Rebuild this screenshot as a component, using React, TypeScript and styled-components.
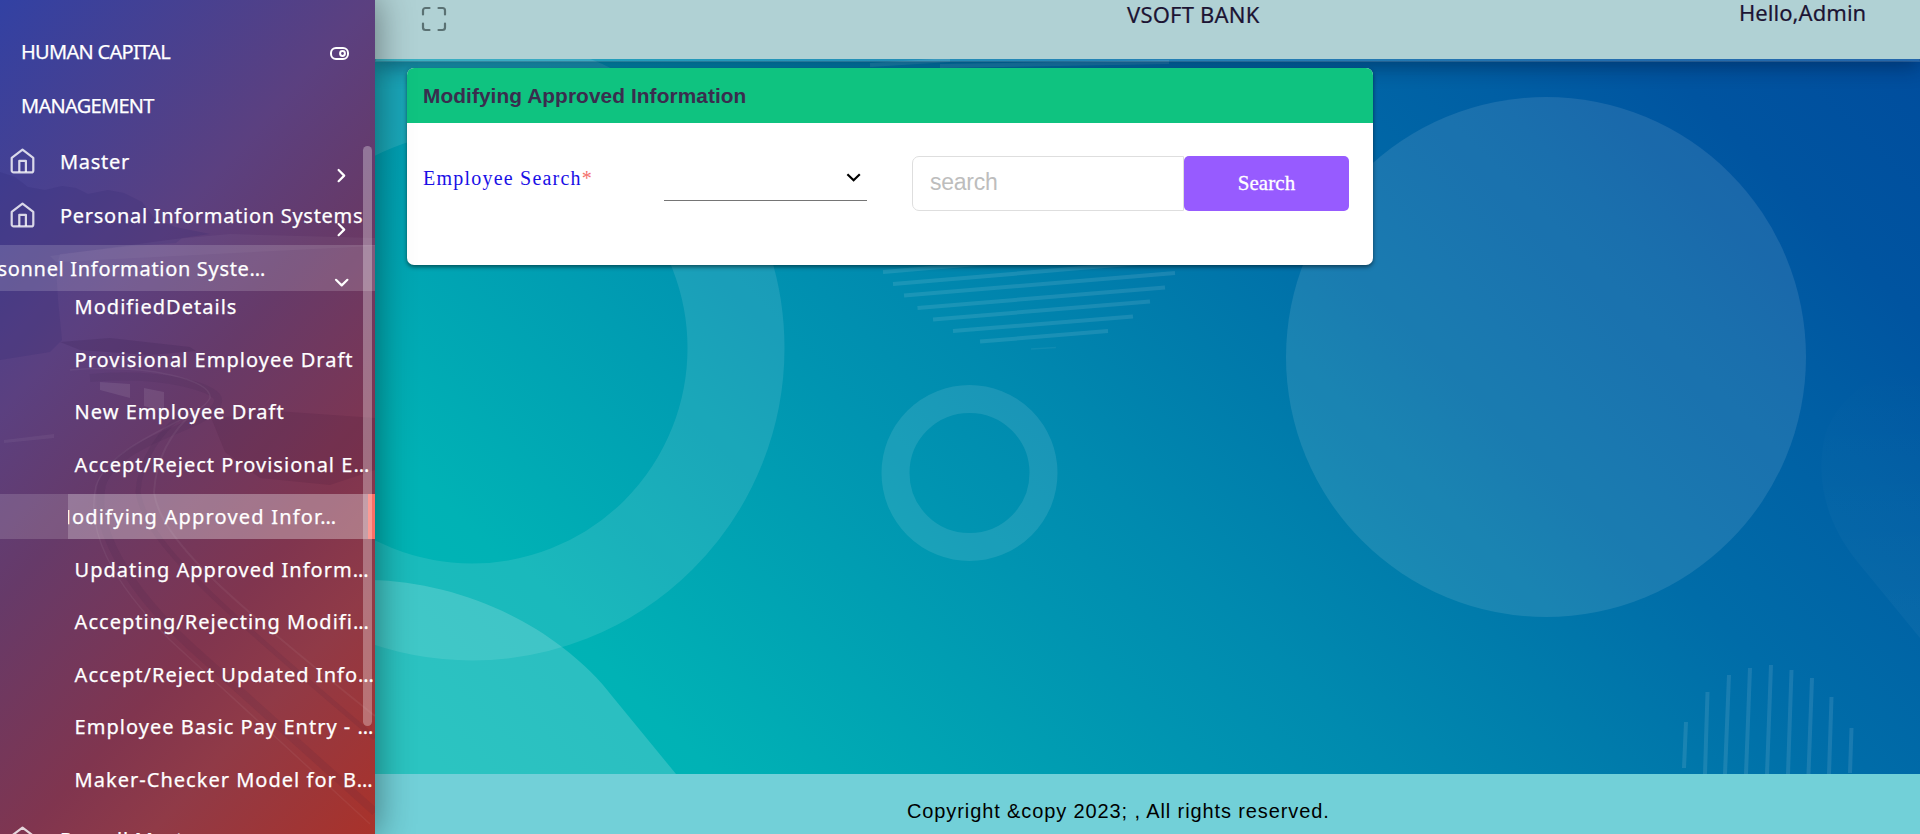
import React from "react";
import styled, { createGlobalStyle, css } from "styled-components";

const GlobalStyle = createGlobalStyle`
  * { box-sizing: border-box; }
  html, body { margin: 0; padding: 0; overflow: hidden; }
  body { font-family: "Noto Sans", "Open Sans", sans-serif; }
`;

const Page = styled.div`
  position: relative;
  display: flex;
  width: 100%;
  height: 834px;
  overflow: hidden;
`;

const Backdrop = styled.svg`
  position: absolute;
  inset: 0;
  width: 1920px;
  height: 834px;
`;

/* ---------- sidebar ---------- */

const Sidebar = styled.aside`
  position: relative;
  z-index: 2;
  flex: 0 0 375px;
  width: 375px;
  min-width: 0;
  height: 834px;
  padding-top: 25px;
  color: #fff;
  font-size: 20px;
  -webkit-text-stroke: 0.25px #fff;
  background: linear-gradient(
    132deg,
    #3241a3 0%,
    #5b4080 33%,
    #663a69 48%,
    #80354f 69%,
    #903a47 80%,
    #a9322a 100%
  );
  box-shadow: 0 0 34px 2px rgba(0, 0, 0, 0.42);
`;

const SidebarArt = styled.svg`
  position: absolute;
  inset: 0;
  width: 375px;
  height: 834px;
`;

const Brand = styled.div`
  position: relative;
  display: flex;
  justify-content: space-between;
  height: 109px;
  padding: 0 26px 0 21px;
`;

const BrandName = styled.div`
  width: 200px;
  line-height: 54px;
  letter-spacing: -0.7px;
`;

const ToggleIcon = styled.svg`
  width: 19px;
  height: 13px;
  margin-top: 22px;
`;

const Nav = styled.nav`
  position: relative;
  height: 700px;
  overflow: hidden;
`;

const NavRow = styled.div`
  position: relative;
  display: flex;
  align-items: center;
  height: 54px;
  padding-left: 10px;
  white-space: nowrap;
  letter-spacing: 0.72px;
`;

const RowLabel = styled.span`
  margin-left: 25px;
`;

const OpenRow = styled(NavRow)`
  justify-content: flex-end;
  height: 46px;
  margin-top: 3px;
  padding: 0 109px 0 0;
  letter-spacing: 0.68px;
  background: rgba(255, 255, 255, 0.16);
`;

const RowChevron = styled.svg<{ $top: number }>`
  position: absolute;
  right: 25px;
  top: ${(p) => p.$top}px;
  width: 17px;
  height: 17px;
`;

const SubList = styled.div`
  margin-top: -7px;
  padding-bottom: 3px;
`;

const SubItem = styled.div<{ $active?: boolean }>`
  height: 45px;
  margin-bottom: 7.5px;
  padding-left: ${(p) => (p.$active ? 68 : 74.6)}px;
  line-height: 46px;
  letter-spacing: 1.02px;
  white-space: nowrap;
  overflow: hidden;
  ${(p) =>
    p.$active &&
    css`
      background: rgba(255, 255, 255, 0.15);
      letter-spacing: 1.2px;
    `}
`;

const ActiveFill = styled.div`
  height: 45px;
  overflow: hidden;
  text-indent: -15.3px;
  background: rgba(255, 255, 255, 0.2);
  border-right: 7px solid #fa6f66;
`;

const ScrollThumb = styled.div`
  position: absolute;
  left: 363px;
  top: 146px;
  width: 9px;
  height: 580px;
  border-radius: 5px;
  background: rgba(255, 255, 255, 0.3);
`;

/* ---------- main area ---------- */

const Main = styled.main`
  position: relative;
  flex: 1;
  min-width: 0;
  display: flex;
  flex-direction: column;
  height: 834px;
`;

const TopBar = styled.header`
  display: grid;
  grid-template-columns: 47px 1fr 180px;
  height: 62px;
  color: #1c1433;
  font-size: 22px;
  -webkit-text-stroke: 0.2px #1c1433;
  background: #b0d1d4;
  background-clip: padding-box;
  border-bottom: 3px solid rgba(255, 255, 255, 0.14);
  box-shadow: 0 5px 20px rgba(0, 20, 50, 0.42);
`;

const FullscreenIcon = styled.svg`
  width: 26px;
  height: 26px;
  margin: 6px 0 0 46px;
`;

const BankName = styled.div`
  padding-left: 705px;
  line-height: 29px;
  letter-spacing: 0.2px;
`;

const Greeting = styled.div`
  line-height: 25px;
  letter-spacing: 0.05px;
  margin-left: -1px;
`;

const Content = styled.section`
  flex: 1;
  padding: 6px 0 0 32px;
`;

const Card = styled.div`
  width: 966px;
  height: 197px;
  border-radius: 7px;
  overflow: hidden;
  background: #fff;
  box-shadow: 0 2px 4px rgba(0, 0, 0, 0.5);
`;

const CardTitle = styled.h2`
  height: 55px;
  margin: 0;
  padding-left: 16px;
  background: #0fc380;
  color: #3a2d4e;
  font: bold 20.8px/55px "Liberation Sans", Arial, sans-serif;
  letter-spacing: 0.1px;
`;

const FormRow = styled.div`
  display: flex;
  align-items: flex-start;
  padding: 33px 24px 0 16px;
`;

const FieldLabel = styled.label`
  width: 241px;
  color: #1a10e6;
  font: 20px/44px "Liberation Serif", "Times New Roman", serif;
  letter-spacing: 1.22px;
`;

const Required = styled.span`
  color: #f4716b;
`;

const Select = styled.div`
  display: flex;
  justify-content: flex-end;
  width: 203px;
  height: 45px;
  padding: 13px 5px 0 0;
  border-bottom: 1px solid #757575;
`;

const SearchGroup = styled.div`
  display: flex;
  height: 55px;
  margin-left: 45px;
`;

const SearchInput = styled.input`
  width: 272px;
  height: 55px;
  padding: 0 0 3px 17px;
  border: 1px solid #dedede;
  border-radius: 7px 0 0 7px;
  outline: none;
  background: #fff;
  font: 23px "Liberation Sans", Arial, sans-serif;
  letter-spacing: -0.25px;
  &::placeholder {
    color: #bdbdbd;
    opacity: 1;
  }
`;

const SearchButton = styled.button`
  width: 165px;
  height: 55px;
  padding: 0;
  border: 0;
  border-radius: 5px;
  background: #975bff;
  color: #fff;
  font: 21px "Liberation Serif", "Times New Roman", serif;
  letter-spacing: 0.1px;
  -webkit-text-stroke: 0.3px #fff;
`;

const Footer = styled.footer`
  height: 60px;
  padding: 13px 0 0 532px;
  background: #72d0d8;
  color: #000;
  font: 20px/48px "Liberation Sans", Arial, sans-serif;
  letter-spacing: 0.89px;
`;

const HomeIcon = () => (
  <svg width="25" height="26" viewBox="0 0 25 26" fill="none" stroke="#fff" strokeOpacity="0.8" strokeWidth="2.2" strokeLinejoin="round">
    <path d="M1.7 9.8 12.5 1.6 23.3 9.8V22.4a2 2 0 0 1-2 2H3.7a2 2 0 0 1-2-2Z" />
    <path d="M9.3 24V12.8h6.6V24" />
  </svg>
);

const RightChevron = () => (
  <RowChevron $top={33} viewBox="0 0 17 17" fill="none" stroke="#fff" strokeWidth="2.2" strokeLinecap="round" strokeLinejoin="round">
    <path d="M5.6 3 11.2 8.6 5.6 14.2" />
  </RowChevron>
);

const subItemsBefore = [
  "ModifiedDetails",
  "Provisional Employee Draft",
  "New Employee Draft",
  "Accept/Reject Provisional E…",
];

const subItemsAfter = [
  "Updating Approved Inform…",
  "Accepting/Rejecting Modifi…",
  "Accept/Reject Updated Info…",
  "Employee Basic Pay Entry - …",
  "Maker-Checker Model for B…",
];

const slantedLines = [
  [883, 272, 1186, 246],
  [893, 284, 1182, 259.5],
  [904, 295.5, 1175, 273],
  [917.5, 308, 1165, 287.5],
  [933, 319.5, 1150, 301.5],
  [953, 331, 1133, 316.5],
  [980, 341.5, 1108, 331],
  [870, 65, 950, 60],
  [940, 66, 1169, 62],
];

const uprightLines = [
  [1686, 722, 1684, 768],
  [1707.5, 692, 1705, 774],
  [1729, 675, 1725, 774],
  [1750, 668, 1746, 774],
  [1771, 665, 1767, 774],
  [1791.5, 670, 1788, 774],
  [1812, 678, 1808.5, 774],
  [1831.5, 697, 1829, 774],
  [1851.5, 728, 1850, 773],
];

const PageBackdrop = () => (
  <Backdrop viewBox="0 0 1920 834">
    <defs>
      <linearGradient id="sea" gradientUnits="userSpaceOnUse" x1="375" y1="834" x2="1564.5" y2="-355.5">
        <stop offset="0" stopColor="#00bbb5" />
        <stop offset=".168" stopColor="#00b2b5" />
        <stop offset=".315" stopColor="#009db2" />
        <stop offset=".378" stopColor="#0094b1" />
        <stop offset=".454" stopColor="#008aaf" />
        <stop offset=".554" stopColor="#007bab" />
        <stop offset=".655" stopColor="#006ca8" />
        <stop offset=".78" stopColor="#005fa4" />
        <stop offset=".865" stopColor="#0054a0" />
        <stop offset="1" stopColor="#004c9d" />
      </linearGradient>
      <linearGradient id="haze" x1="0" y1="0" x2="0" y2="1">
        <stop offset="0" stopColor="#fff" stopOpacity="0" />
        <stop offset="1" stopColor="#fff" stopOpacity=".035" />
      </linearGradient>
    </defs>
    <rect width="1920" height="834" fill="url(#sea)" />
    <circle cx="472" cy="348" r="264" fill="none" stroke="#fff" strokeOpacity=".1" strokeWidth="97" />
    <path d="M370 580C440 581 512 608 562 647C584 664 599 679 612 696L676 774H370Z" fill="#fff" fillOpacity=".17" />
    <circle cx="969.5" cy="473" r="74" fill="none" stroke="#fff" strokeOpacity=".1" strokeWidth="28" />
    <circle cx="1546" cy="357" r="260" fill="#fff" fillOpacity=".1" />
    <path d="M1920 638L1856 560C1826 522 1816 480 1824 440C1832 404 1868 372 1920 362Z" fill="url(#haze)" />
    <g stroke="#fff" strokeOpacity=".1" strokeWidth="4">
      {slantedLines.map(([a, b, c, d]) => (
        <line key={`${a}-${b}`} x1={a} y1={b} x2={c} y2={d} />
      ))}
      {uprightLines.map(([a, b, c, d]) => (
        <line key={`${a}-${b}`} x1={a} y1={b} x2={c} y2={d} />
      ))}
    </g>
    <line x1="1031" y1="349" x2="1056" y2="347.5" stroke="#fff" strokeOpacity=".06" strokeWidth="1.5" />
  </Backdrop>
);

const CoastArt = () => (
  <SidebarArt viewBox="0 0 375 834" fill="none">
    <path
      d="M0 172L15 177L28 187L45 190L62 186L76 188L88 194L108 190L124 193L142 202L154 218L175 227L210 234L182 238L176 243L130 246L60 254L56 268L58 300L62 340L50 352L0 360Z"
      fill="#241f68"
      fillOpacity=".14"
    />
    <path d="M175 239L230 234L375 238V246L56 262L50 256Z" fill="#fff" fillOpacity=".04" />
    <path d="M60 342L110 338L190 347L196 351L150 355L80 350Z" fill="#2a1440" fillOpacity=".15" />
    <path d="M212 420L262 410L375 418V470L330 485L260 478L225 452Z" fill="#3b0f30" fillOpacity=".12" />
    <path d="M90 378C165 372 222 388 218 402C212 428 120 436 102 484C92 530 130 590 190 646L375 812" stroke="#2a1440" strokeOpacity=".08" strokeWidth="8" />
    <path d="M70 370C150 364 212 380 210 398C200 420 112 440 96 486C86 530 110 580 170 640L370 824" stroke="#fff" strokeOpacity=".05" strokeWidth="1.5" />
    <path d="M196 410C170 432 156 460 154 492C160 540 230 600 375 716" stroke="#fff" strokeOpacity=".05" strokeWidth="2" />
    <path d="M186 412C160 430 140 460 138 492C146 540 200 590 375 738" stroke="#2a1440" strokeOpacity=".08" strokeWidth="5" />
    <path d="M100 382L130 384V398L100 390ZM144 388L164 392V412L144 406Z" fill="#fff" fillOpacity=".09" />
    <path d="M4 440L54 434V438L4 443Z" fill="#fff" fillOpacity=".05" />
  </SidebarArt>
);

export default function App() {
  return (
    <Page>
      <GlobalStyle />
      <PageBackdrop />
      <Sidebar>
        <CoastArt />
        <Brand>
          <BrandName>HUMAN CAPITAL MANAGEMENT</BrandName>
          <ToggleIcon viewBox="0 0 19 13" fill="none" stroke="#fff" strokeWidth="2">
            <rect x="1" y="1" width="17" height="11" rx="5" />
            <circle cx="12.5" cy="6.5" r="2.4" />
          </ToggleIcon>
        </Brand>
        <Nav>
          <NavRow>
            <HomeIcon />
            <RowLabel>Master</RowLabel>
            <RightChevron />
          </NavRow>
          <NavRow>
            <HomeIcon />
            <RowLabel>Personal Information Systems</RowLabel>
            <RightChevron />
          </NavRow>
          <OpenRow>
            <span>Personnel Information Syste…</span>
            <RowChevron $top={29} viewBox="0 0 17 17" fill="none" stroke="#fff" strokeWidth="2.2" strokeLinecap="round" strokeLinejoin="round">
              <path d="M3 5.8 8.7 11.4 14.4 5.8" />
            </RowChevron>
          </OpenRow>
          <SubList>
            {subItemsBefore.map((t) => (
              <SubItem key={t}>{t}</SubItem>
            ))}
            <SubItem $active>
              <ActiveFill>Modifying Approved Infor…</ActiveFill>
            </SubItem>
            {subItemsAfter.map((t) => (
              <SubItem key={t}>{t}</SubItem>
            ))}
          </SubList>
          <NavRow>
            <HomeIcon />
            <RowLabel>Payroll Master</RowLabel>
          </NavRow>
        </Nav>
        <ScrollThumb />
      </Sidebar>
      <Main>
        <TopBar>
          <FullscreenIcon viewBox="0 0 26 26" fill="none" stroke="#5a7173" strokeWidth="2.2" strokeLinecap="round">
            <path d="M2 8.5V4.5A2.5 2.5 0 0 1 4.5 2H8.5M17.5 2H21.5A2.5 2.5 0 0 1 24 4.5V8.5M24 17.5V21.5A2.5 2.5 0 0 1 21.5 24H17.5M8.5 24H4.5A2.5 2.5 0 0 1 2 21.5V17.5" />
          </FullscreenIcon>
          <BankName>VSOFT BANK</BankName>
          <Greeting>Hello,Admin</Greeting>
        </TopBar>
        <Content>
          <Card>
            <CardTitle>Modifying Approved Information</CardTitle>
            <FormRow>
              <FieldLabel>
                Employee Search<Required>*</Required>
              </FieldLabel>
              <Select>
                <svg width="17" height="17" viewBox="0 0 17 17" fill="none" stroke="#000" strokeWidth="2.2" strokeLinejoin="miter">
                  <path d="M2.4 5.2 8.6 11.2 14.8 5.2" />
                </svg>
              </Select>
              <SearchGroup>
                <SearchInput placeholder="search" />
                <SearchButton>Search</SearchButton>
              </SearchGroup>
            </FormRow>
          </Card>
        </Content>
        <Footer>Copyright &amp;copy 2023; , All rights reserved.</Footer>
      </Main>
    </Page>
  );
}
